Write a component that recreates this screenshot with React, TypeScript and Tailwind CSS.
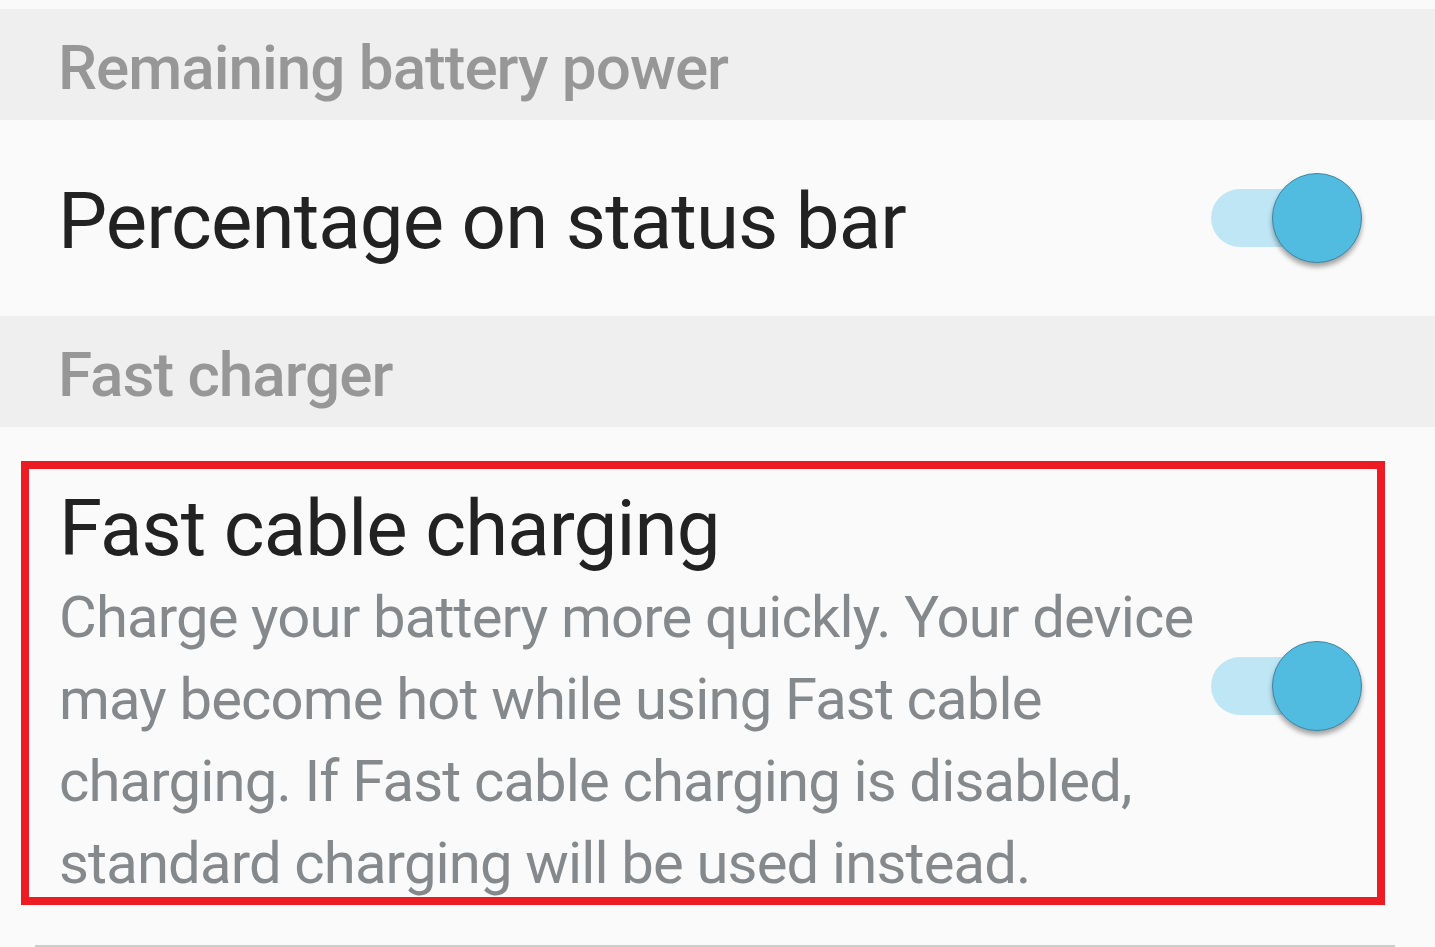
import React from "react";

const font = { fontFamily: "Roboto, 'Noto Sans', sans-serif" };

function Toggle() {
  return (
    <div className="relative w-[151px] h-[90px] shrink-0">
      <div className="absolute left-0 top-[16px] w-[125px] h-[58px] rounded-full bg-[#bfe6f4]" />
      <div className="absolute right-0 top-0 w-[90px] h-[90px] rounded-full bg-[#52bbe0] border border-[#3f86a3] shadow-[0_4px_5px_rgba(0,0,0,0.35)]" />
    </div>
  );
}

export default function App() {
  return (
    <div className="w-[1435px] h-[947px] bg-[#fafafa] overflow-hidden" style={font}>
      <div className="h-[9px]" />
      <div className="h-[111px] bg-[#efefef] flex items-center pl-[58px] pt-[6px]">
        <span className="text-[62px] leading-none font-medium tracking-[-1px] text-[#979797]">Remaining battery power</span>
      </div>
      <div className="h-[196px] flex items-center justify-between pl-[58px] pr-[73px]">
        <span className="text-[78px] leading-none tracking-[-0.9px] text-[#222222] mt-[8px]">Percentage on status bar</span>
        <Toggle />
      </div>
      <div className="h-[111px] bg-[#efefef] flex items-center pl-[58px] pt-[6px]">
        <span className="text-[62px] leading-none font-medium tracking-[-1px] text-[#979797]">Fast charger</span>
      </div>
      <div className="h-[34px]" />
      <div className="ml-[21px] w-[1364px] h-[444px] border-[8px] border-[#ed1c24] flex justify-between pr-[15px]">
        <div className="pt-[15px] pl-[30px] min-w-0 flex-1">
          <div className="text-[78px] leading-[90px] tracking-[-0.9px] text-[#222222]">Fast cable charging</div>
          <div className="mt-[2px] text-[58px] leading-[82px] tracking-[-0.85px] text-[#86898c] whitespace-nowrap">
            <div>Charge your battery more quickly. Your device</div>
            <div>may become hot while using Fast cable</div>
            <div>charging. If Fast cable charging is disabled,</div>
            <div>standard charging will be used instead.</div>
          </div>
        </div>
        <div className="self-center mt-[6px] shrink-0">
          <Toggle />
        </div>
      </div>
      <div className="h-[40px]" />
      <div className="ml-[35px] w-[1360px] h-[2px] bg-[#cccccc]" />
    </div>
  );
}
